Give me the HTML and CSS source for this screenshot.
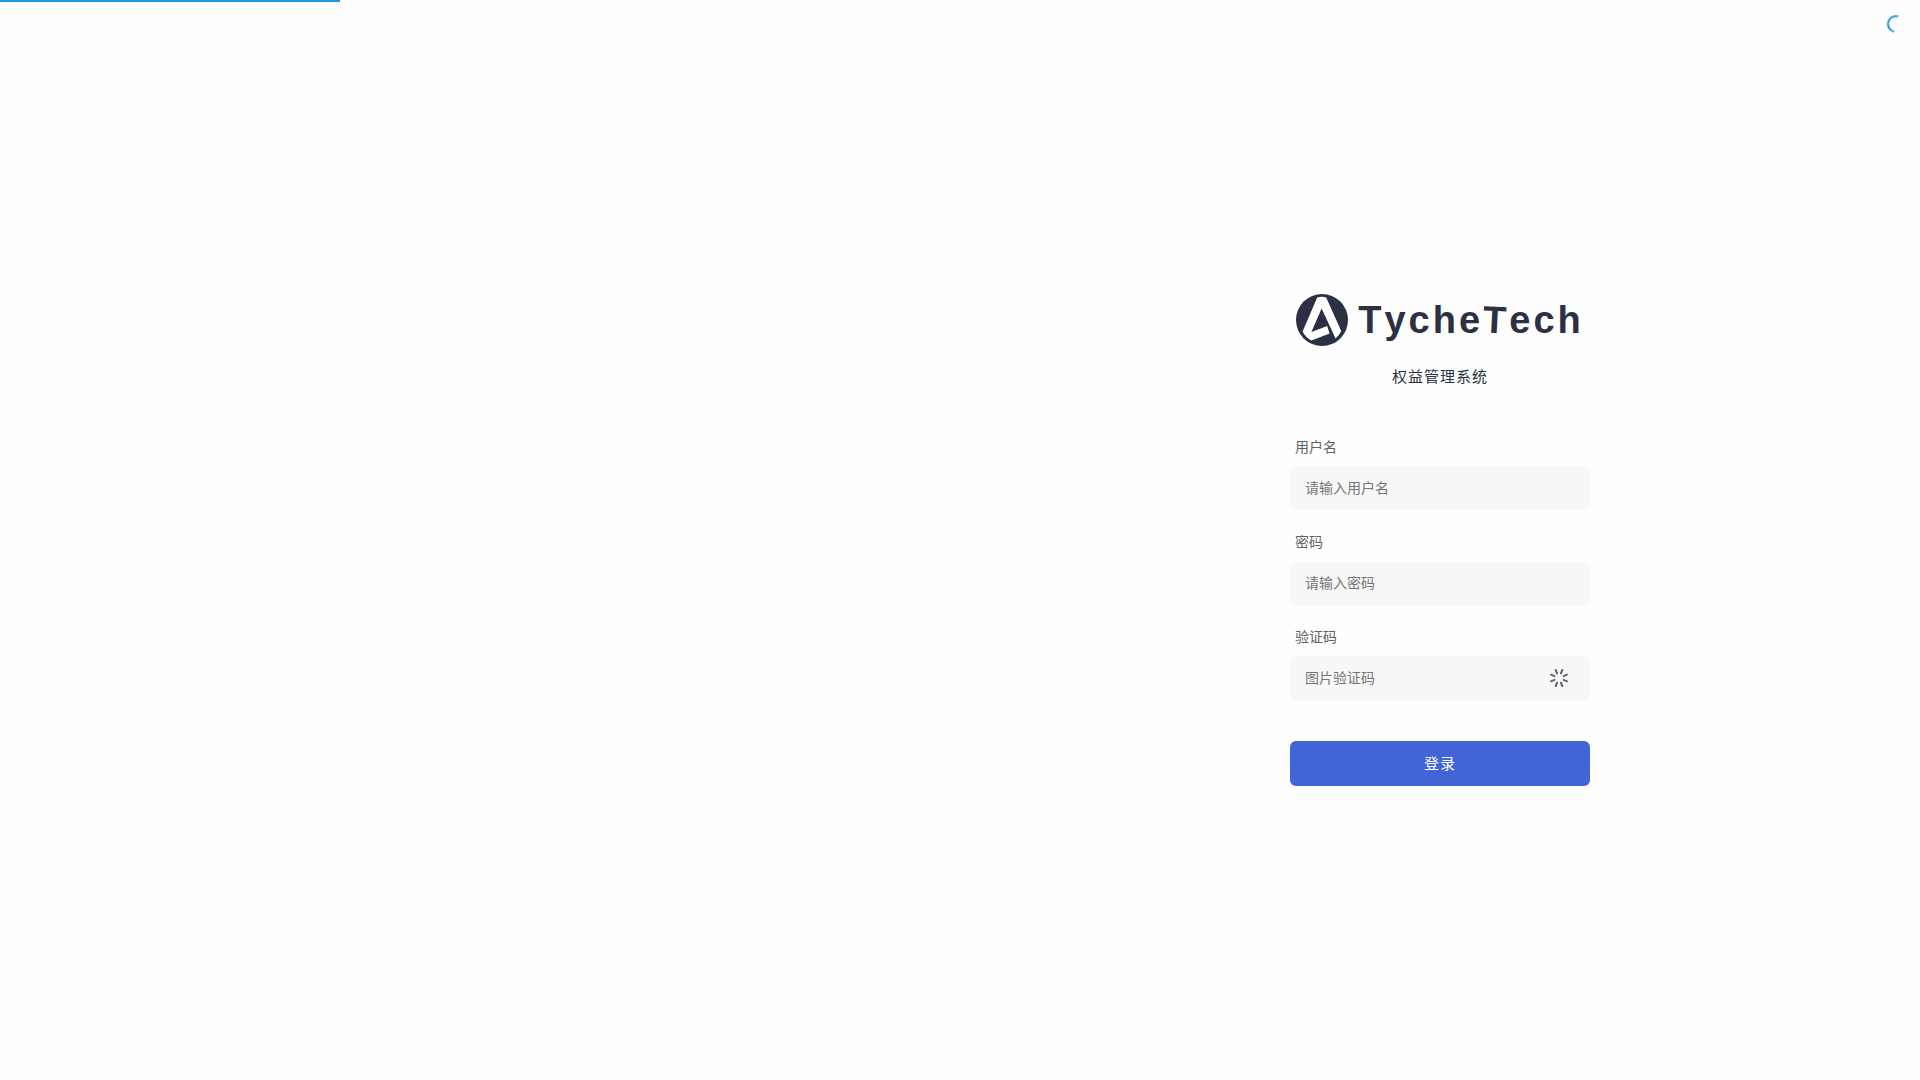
FILE: index.html
```html
<!DOCTYPE html>
<html lang="zh-CN">

<head>
    <meta charset="utf-8">
    <title>权益管理系统</title>
    <meta name="viewport" content="width=device-width,initial-scale=1">
    <link rel="stylesheet" href="styles.css">
</head>

<body>
    <div id="nprogress">
        <div class="bar"></div>
        <div class="spinner"></div>
    </div>

    <main class="login">
        <form class="login-form">
            <h1 class="logo">
                <svg class="logo-icon" viewBox="0 0 52 52" aria-hidden="true">
                    <circle cx="26" cy="26" r="26" fill="#2b3044"/>
                    <path fill="#fff" d="M21.2 3.4Q26 2 30.2 3.4L45.2 37Q43 41.8 39.6 44.6L25.6 14.6L15.4 38L31.2 32L33.6 39.4L15.4 46.4Q9.4 43.6 6.6 37.6Z"/>
                </svg>
                <span class="logo-text">Tyche<span class="tilt">T</span>ech</span>
            </h1>
            <p class="subtitle">权益管理系统</p>

            <div class="field">
                <label for="username">用户名</label>
                <input id="username" type="text" placeholder="请输入用户名">
            </div>
            <div class="field">
                <label for="password">密码</label>
                <input id="password" type="password" placeholder="请输入密码">
            </div>
            <div class="field">
                <label for="captcha">验证码</label>
                <div class="captcha">
                    <input id="captcha" type="text" placeholder="图片验证码">
                    <svg class="captcha-loading" viewBox="-10 -10 20 20" aria-hidden="true">
                        <g stroke="#5e6273" stroke-width="2" stroke-linecap="round">
                            <path d="M3.3 -8L1.9 -4.6M8 -3.3L4.6 -1.9M8 3.3L4.6 1.9M3.3 8L1.9 4.6"/>
                            <path d="M-3.3 8L-1.9 4.6M-8 3.3L-4.6 1.9M-8 -3.3L-4.6 -1.9M-3.3 -8L-1.9 -4.6"/>
                        </g>
                    </svg>
                </div>
            </div>

            <button class="submit" type="submit">登录</button>
        </form>
    </main>
</body>

</html>
```

FILE: styles.css
```css
* {
    box-sizing: border-box;
}
html, body {
    margin: 0;
    height: 100%;
}
body {
    background: #fefefe;
    color: #2b3044;
    font-family: "Liberation Sans", "Noto Sans CJK SC", sans-serif;
    font-size: 14px;
}

/* page loading bar */
#nprogress .bar {
    position: fixed;
    top: 0;
    left: 0;
    width: 17.72%;
    height: 2px;
    background: #29d;
}
#nprogress .spinner {
    position: fixed;
    top: 15px;
    right: 15px;
    width: 18px;
    height: 18px;
    border: 2px solid transparent;
    border-top-color: #29d;
    border-left-color: #29d;
    border-radius: 50%;
    transform: rotate(-30deg);
}

.login {
    display: flex;
    align-items: center;
    justify-content: center;
    width: 50%;
    min-height: 100%;
    margin-left: auto;
}
.login-form {
    width: 300px;
}

.logo {
    display: flex;
    align-items: center;
    justify-content: center;
    gap: 10px;
    margin: 0;
}
.logo-icon {
    width: 52px;
    height: 52px;
}
.logo-text {
    font-size: 38px;
    font-kerning: none;
    line-height: 52px;
    letter-spacing: 3px;
}
.tilt {
    display: inline-block;
    transform: rotate(3deg);
}
.subtitle {
    margin: 21px 0 50px;
    font-size: 15px;
    line-height: 20px;
    letter-spacing: 1px;
    text-align: center;
}

.field {
    margin-bottom: 21px;
}
.field label {
    display: block;
    margin-bottom: 9px;
    padding-left: 5px;
    color: #606266;
    line-height: 20px;
}
.field input {
    display: block;
    width: 100%;
    height: 45px;
    padding: 0 15px 2px;
    border: 0;
    border-radius: 6px;
    outline: none;
    background: #f8f8f8;
    color: #2b3044;
    font: inherit;
}
.field input::placeholder {
    color: #757575;
}
.captcha {
    position: relative;
}
.captcha-loading {
    position: absolute;
    top: 12px;
    right: 21px;
    width: 20px;
    height: 20px;
}

.submit {
    display: block;
    width: 100%;
    height: 45px;
    margin-top: 40px;
    padding: 0 0 2px;
    border: 0;
    border-radius: 6px;
    background: #4165d7;
    color: #fff;
    font-family: inherit;
    font-size: 15px;
    letter-spacing: 1px;
    cursor: pointer;
}
```
